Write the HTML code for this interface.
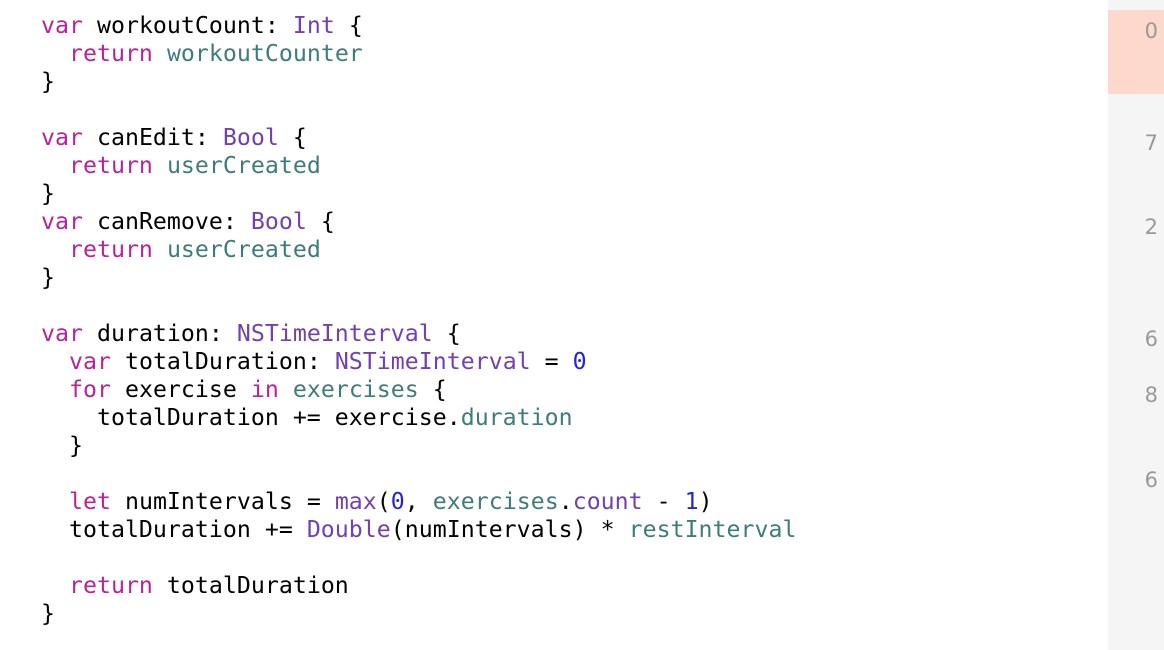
<!DOCTYPE html>
<html><head><meta charset="utf-8"><style>
html,body{margin:0;padding:0;background:#fff;width:1164px;height:650px;overflow:hidden}
pre{position:absolute;left:41px;top:12px;margin:0;font-family:"DejaVu Sans Mono","Liberation Mono",monospace;font-size:23.2px;line-height:28px;color:#000;letter-spacing:0.03px}
.k{color:#b8239a}.t{color:#7241ab}.v{color:#3e7b7d}.n{color:#2424d0}
.g{position:absolute;left:1108px;top:0;width:56px;height:650px;background:#f5f5f5}
.h{position:absolute;left:1108px;top:10px;width:56px;height:84px;background:#fdd9cd}
.num{position:absolute;right:6px;font-family:"DejaVu Sans","Liberation Sans",sans-serif;font-size:21px;color:#999;line-height:28px}
</style></head><body>
<div class="g"></div><div class="h"></div>
<div class="num" style="top:17px">0</div>
<div class="num" style="top:129px">7</div>
<div class="num" style="top:213px">2</div>
<div class="num" style="top:325px">6</div>
<div class="num" style="top:381px">8</div>
<div class="num" style="top:466px">6</div>
<pre><span class="k">var</span> workoutCount: <span class="t">Int</span> {
  <span class="k">return</span> <span class="v">workoutCounter</span>
}

<span class="k">var</span> canEdit: <span class="t">Bool</span> {
  <span class="k">return</span> <span class="v">userCreated</span>
}
<span class="k">var</span> canRemove: <span class="t">Bool</span> {
  <span class="k">return</span> <span class="v">userCreated</span>
}

<span class="k">var</span> duration: <span class="t">NSTimeInterval</span> {
  <span class="k">var</span> totalDuration: <span class="t">NSTimeInterval</span> = <span class="n">0</span>
  <span class="k">for</span> exercise <span class="k">in</span> <span class="v">exercises</span> {
    totalDuration += exercise.<span class="v">duration</span>
  }

  <span class="k">let</span> numIntervals = <span class="t">max</span>(<span class="n">0</span>, <span class="v">exercises</span>.<span class="t">count</span> - <span class="n">1</span>)
  totalDuration += <span class="t">Double</span>(numIntervals) * <span class="v">restInterval</span>

  <span class="k">return</span> totalDuration
}</pre>
</body></html>
